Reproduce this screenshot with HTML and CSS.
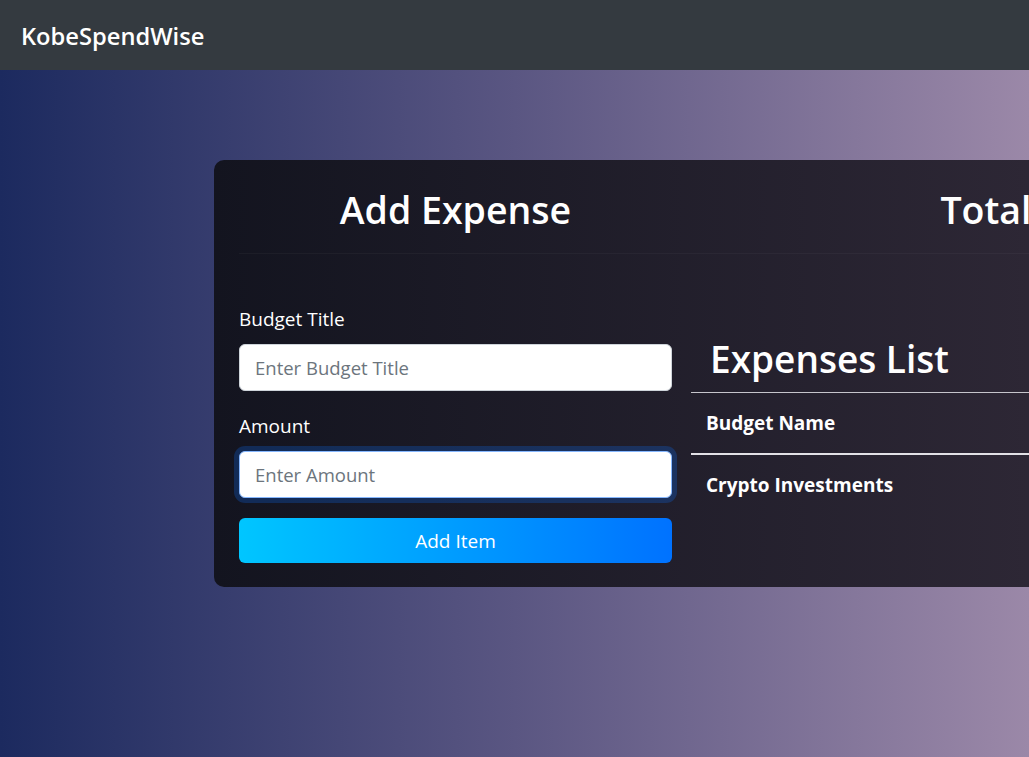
FILE: index.html
```html
<!DOCTYPE html>
<html lang="en">
<head>
<meta charset="utf-8">
<title>KobeSpendWise</title>
<link rel="stylesheet" href="styles.css">
</head>
<body>
<nav class="navbar">
  <a class="brand" href="#">KobeSpendWise</a>
</nav>
<main class="main">
  <section class="card">
    <div class="card-head">
      <h2 class="title title-left">Add Expense</h2>
      <h2 class="title title-right">Total Expenses: $0</h2>
    </div>
    <div class="card-body">
      <form class="expense-form">
        <label class="form-label" for="title">Budget Title</label>
        <input class="form-control" id="title" type="text" placeholder="Enter Budget Title">
        <label class="form-label label-gap" for="amount">Amount</label>
        <input class="form-control is-focused" id="amount" type="number" placeholder="Enter Amount">
        <button class="btn-add" type="button">Add Item</button>
      </form>
      <div class="list">
        <h2 class="list-title">Expenses List</h2>
        <table class="table">
          <thead>
            <tr><th>Budget Name</th></tr>
          </thead>
          <tbody>
            <tr><td>Crypto Investments</td></tr>
          </tbody>
        </table>
      </div>
    </div>
  </section>
</main>
</body>
</html>
```

FILE: styles.css
```css
* { box-sizing: border-box; }

html, body {
  margin: 0;
  padding: 0;
}

body {
  width: 1029px;
  min-height: 757px;
  overflow: hidden;
  font-family: "Open Sans", "Noto Sans", "Liberation Sans", sans-serif;
  color: #ffffff;
  background: linear-gradient(90deg, #1c2a5f 0%, #5a5682 50%, #9b88a8 100%);
}

.navbar {
  height: 70px;
  background: #343a40;
  display: flex;
  align-items: center;
  padding-left: 21px;
}

.brand {
  color: #ffffff;
  text-decoration: none;
  font-size: 23.7px;
  line-height: 30px;
  font-weight: 600;
  margin-top: 2px;
}

.main {
  padding: 90px 0 0 214px;
}

.card {
  width: 1335px;
  border-radius: 10px;
  background: linear-gradient(90deg, #13141f 0px, #2d2735 815px, #3a3242 1335px);
  padding: 0 25px 24px;
}

.card-head {
  display: grid;
  grid-template-columns: 433px 831px;
  column-gap: 19px;
  padding: 27px 0 20px;
  border-bottom: 1px solid rgba(255, 255, 255, 0.035);
}

.title {
  margin: 0;
  font-size: 37.5px;
  line-height: 46px;
  font-weight: 600;
  text-align: center;
}

.card-body {
  display: grid;
  grid-template-columns: 433px 833px;
  column-gap: 19px;
  align-items: start;
}

.expense-form {
  display: flex;
  flex-direction: column;
  padding-top: 51px;
}

.form-label {
  font-size: 19px;
  line-height: 28px;
  margin-bottom: 11px;
}

.label-gap {
  margin-top: 21px;
}

.form-control {
  width: 100%;
  height: 47px;
  padding: 0 15px;
  font-family: inherit;
  font-size: 18.5px;
  color: #212529;
  background: #ffffff;
  border: 1px solid #ced4da;
  border-radius: 6px;
  outline: none;
}

.form-control::placeholder {
  color: #6c757d;
}

.is-focused {
  border-color: #86b7fe;
  box-shadow: 0 0 0 5px rgba(13, 110, 253, 0.25);
}

.btn-add {
  margin-top: 20px;
  height: 45px;
  width: 100%;
  border: none;
  border-radius: 6px;
  background: linear-gradient(90deg, #00c6ff 0%, #0072ff 100%);
  color: #ffffff;
  font-family: inherit;
  font-size: 19px;
  cursor: pointer;
}

.list {
  padding-top: 82px;
}

.list-title {
  margin: 0 0 10px 19px;
  font-size: 37px;
  line-height: 46px;
  font-weight: 600;
}

.table {
  width: 100%;
  border-collapse: collapse;
  border-top: 1px solid #c6c5cc;
}

.table th,
.table td {
  text-align: left;
  font-size: 19px;
  font-weight: 700;
  line-height: 28px;
  padding: 16px 15px;
  color: #ffffff;
}

.table thead th {
  border-bottom: 2px solid #e2e1e6;
}
```
